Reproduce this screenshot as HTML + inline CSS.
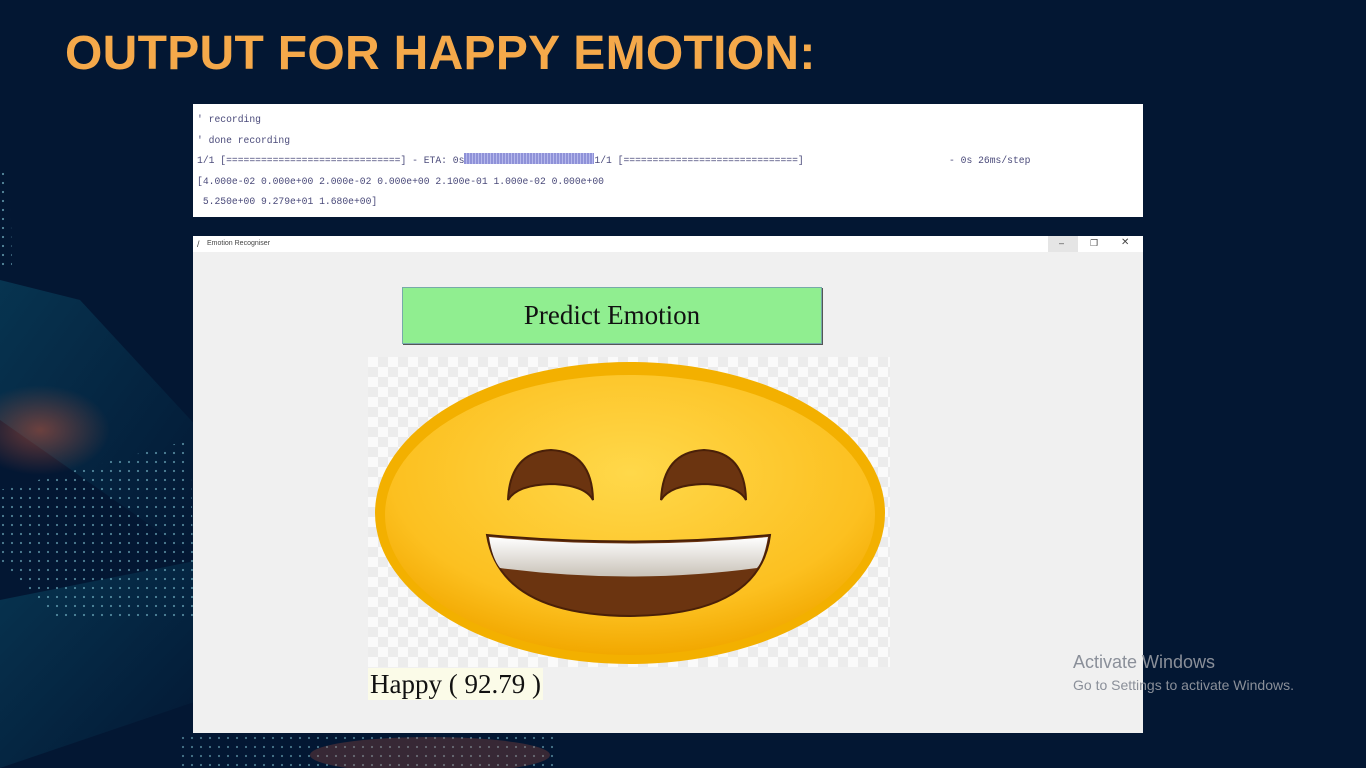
<!DOCTYPE html>
<html><head><meta charset="utf-8"><style>
*{margin:0;padding:0;box-sizing:border-box}
body{width:1366px;height:768px;overflow:hidden;background:#031733;position:relative;font-family:"Liberation Sans",sans-serif}
.title{position:absolute;left:65px;top:26px;font-size:48px;font-weight:bold;color:#f5a94a;letter-spacing:0.3px;white-space:nowrap}
.term{position:absolute;left:193px;top:104px;width:950px;height:113px;background:#fff;font-family:"Liberation Mono",monospace;font-size:9.7px;color:#4a4a7a;padding:6px 4px;line-height:20.5px;white-space:pre}
.prog{display:inline-block;width:130px;height:11px;background:repeating-linear-gradient(90deg,#8f92d8 0 2px,#b6b8ec 2px 3px);vertical-align:-1px}
.win{position:absolute;left:193px;top:236px;width:950px;height:497px;background:#f0f0f0}
.tb{height:16px;background:#fff;font-size:7px;color:#444;padding:4px 0 0 14px;position:relative}
.btn{position:absolute;left:209px;top:51px;width:420px;height:57px;background:#90ee90;border:1px solid #7aa;box-shadow:1px 1px 0 #555;font-family:"Liberation Serif",serif;font-size:27px;text-align:center;line-height:54px;color:#111}
.chk{position:absolute;left:175px;top:121px;width:522px;height:310px;background-color:#fafafa;background-image:linear-gradient(45deg,#ececec 25% ,transparent 25%,transparent 75%,#ececec 75%),linear-gradient(45deg,#ececec 25%,transparent 25%,transparent 75%,#ececec 75%);background-size:20px 20px;background-position:0 0,10px 10px}
.lbl{position:absolute;left:175px;top:432px;background:#fbfbe8;font-family:"Liberation Serif",serif;font-size:27px;color:#111;padding:0 2px;line-height:32px}
.aw{position:absolute;left:1073px;top:652px;color:#8a8f99;font-size:18px}
.aw2{position:absolute;left:1073px;top:677px;color:#8a8f99;font-size:14px}
</style></head><body>
<svg style="position:absolute;left:0;top:0" width="200" height="768">
<defs><radialGradient id="rg" cx="0.5" cy="0.5" r="0.5"><stop offset="0" stop-color="#b0503a" stop-opacity=".6"/><stop offset="1" stop-color="#b0503a" stop-opacity="0"/></radialGradient>
<linearGradient id="tg" x1="0" y1="0" x2="1" y2="1"><stop offset="0" stop-color="#0e6a86" stop-opacity=".35"/><stop offset="1" stop-color="#0e6a86" stop-opacity="0"/></linearGradient>
<pattern id="dots" width="9" height="9" patternUnits="userSpaceOnUse"><circle cx="3" cy="3" r="1.1" fill="#8fd6e6"/></pattern></defs>
<polygon points="0,280 80,300 200,430 200,560 0,420" fill="url(#tg)"/>
<ellipse cx="40" cy="430" rx="70" ry="45" fill="url(#rg)"/>
<polygon points="0,600 200,560 200,700 0,768" fill="url(#tg)"/>
<polygon points="0,490 190,440 195,620 60,620 0,560" fill="url(#dots)" opacity=".55"/>
<polygon points="0,170 10,170 12,270 0,270" fill="url(#dots)" opacity=".6"/>
</svg>
<svg style="position:absolute;left:180px;top:735px" width="380" height="33"><rect width="380" height="33" fill="url(#dots)" opacity=".5"/><ellipse cx="250" cy="20" rx="120" ry="18" fill="#b0503a" opacity=".3"/></svg>
<div class="title">OUTPUT FOR HAPPY EMOTION:</div>
<div class="term">' recording
' done recording
1/1 [==============================] - ETA: 0s<span class="prog"></span>1/1 [==============================]                         - 0s 26ms/step
[4.000e-02 0.000e+00 2.000e-02 0.000e+00 2.100e-01 1.000e-02 0.000e+00
 5.250e+00 9.279e+01 1.680e+00]</div>
<div class="win">
<div class="tb">Emotion Recogniser<span style="position:absolute;left:4px;top:3px;font-size:9px">/</span><span style="position:absolute;left:855px;top:0;width:30px;height:16px;background:#e5e5e5"></span><span style="position:absolute;left:866px;top:2px;font-size:9px">–</span><span style="position:absolute;left:897px;top:2px;font-size:9px">❐</span><span style="position:absolute;left:928px;top:1px;font-size:10px">✕</span></div>
<div class="btn">Predict Emotion</div>
<div class="chk"></div>
<svg style="position:absolute;left:175px;top:121px" width="522" height="310" viewBox="368 357 522 310">
<defs><radialGradient id="fy" cx="0.5" cy="0.35" r="0.65"><stop offset="0" stop-color="#ffd84a"/><stop offset=".75" stop-color="#fcc020"/><stop offset="1" stop-color="#f2a800"/></radialGradient>
<linearGradient id="th" x1="0" y1="0" x2="0" y2="1"><stop offset="0" stop-color="#fff"/><stop offset="1" stop-color="#c9c2b8"/></linearGradient></defs>
<ellipse cx="630" cy="513" rx="255" ry="151" fill="#f3b000"/>
<ellipse cx="630" cy="515" rx="245" ry="140" fill="url(#fy)"/>
<path d="M508 500 Q510 452 551 450 Q592 452 593 500 Q585 485 551 484 Q517 485 508 500Z" fill="#6b3410" stroke="#4a2008" stroke-width="2"/>
<path d="M661 500 Q663 452 704 450 Q745 452 746 500 Q738 485 704 484 Q670 485 661 500Z" fill="#6b3410" stroke="#4a2008" stroke-width="2"/>
<path d="M487 535 Q630 548 770 535 Q760 615 630 616 Q500 615 487 535Z" fill="#6b3410" stroke="#4a2008" stroke-width="2"/>
<path d="M489 537 Q630 550 768 537 Q764 560 757 568 Q630 585 500 568 Q492 558 489 537Z" fill="url(#th)"/>
</svg>
<div class="lbl">Happy ( 92.79 )</div>
</div>
<div class="aw">Activate Windows</div>
<div class="aw2">Go to Settings to activate Windows.</div>
</body></html>
